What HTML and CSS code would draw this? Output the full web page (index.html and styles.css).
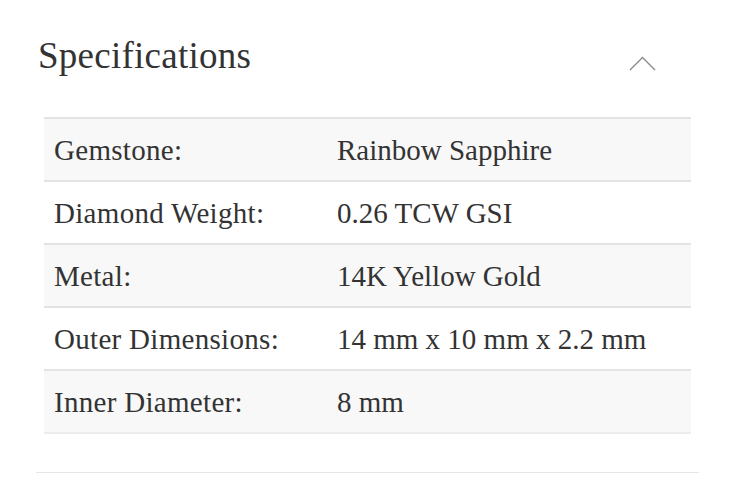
FILE: index.html
```html
<!DOCTYPE html>
<html>
<head>
<meta charset="utf-8">
<link rel="stylesheet" href="styles.css">
</head>
<body>
<section class="specs">
  <div class="specs-header">
    <h2 class="specs-title">Specifications</h2>
    <svg class="chevron" width="27" height="15" viewBox="0 0 27 15">
      <polyline points="1,14 13.5,1.5 26,14" fill="none" stroke="#8a8a8a" stroke-width="1.4"/>
    </svg>
  </div>
  <table class="specs-table">
    <tr><td class="label">Gemstone:</td><td class="value">Rainbow Sapphire</td></tr>
    <tr><td class="label">Diamond Weight:</td><td class="value">0.26 TCW GSI</td></tr>
    <tr><td class="label">Metal:</td><td class="value">14K Yellow Gold</td></tr>
    <tr><td class="label">Outer Dimensions:</td><td class="value">14 mm x 10 mm x 2.2 mm</td></tr>
    <tr><td class="label">Inner Diameter:</td><td class="value">8 mm</td></tr>
  </table>
  <div class="divider"></div>
</section>
</body>
</html>
```
FILE: styles.css
```css
html, body {
  margin: 0;
  padding: 0;
  background: #ffffff;
}
body {
  font-family: "Liberation Serif", "Times New Roman", serif;
  color: #333333;
}
.specs {
  padding: 0 36px;
}
.specs-header {
  display: flex;
  justify-content: space-between;
  align-items: center;
  height: 117px;
  padding-left: 2px;
  padding-right: 43px;
  box-sizing: border-box;
}
.specs-title {
  margin: 0;
  font-weight: normal;
  font-size: 37px;
  line-height: 44px;
  color: #333333;
  align-self: flex-start;
  margin-top: 34px;
  letter-spacing: 0.25px;
}
.chevron {
  display: block;
  align-self: flex-start;
  margin-top: 56px;
}
.specs-table {
  width: 647px;
  margin-left: 8px;
  border-collapse: collapse;
  font-size: 29px;
  color: #333333;
}
.specs-table tr {
  border-top: 2px solid #e3e3e3;
}
.specs-table tr:last-child {
  border-bottom: 2px solid #ececec;
}
.specs-table tr:nth-child(odd) {
  background: #f8f8f8;
}
.specs-table td {
  height: 61px;
  padding: 0 10px;
  vertical-align: middle;
  line-height: 32px;
}
.specs-table td.label {
  width: 263px;
  letter-spacing: 0.3px;
}
.divider {
  height: 1px;
  background: #e6e6e6;
  margin-top: 38px;
}
```
